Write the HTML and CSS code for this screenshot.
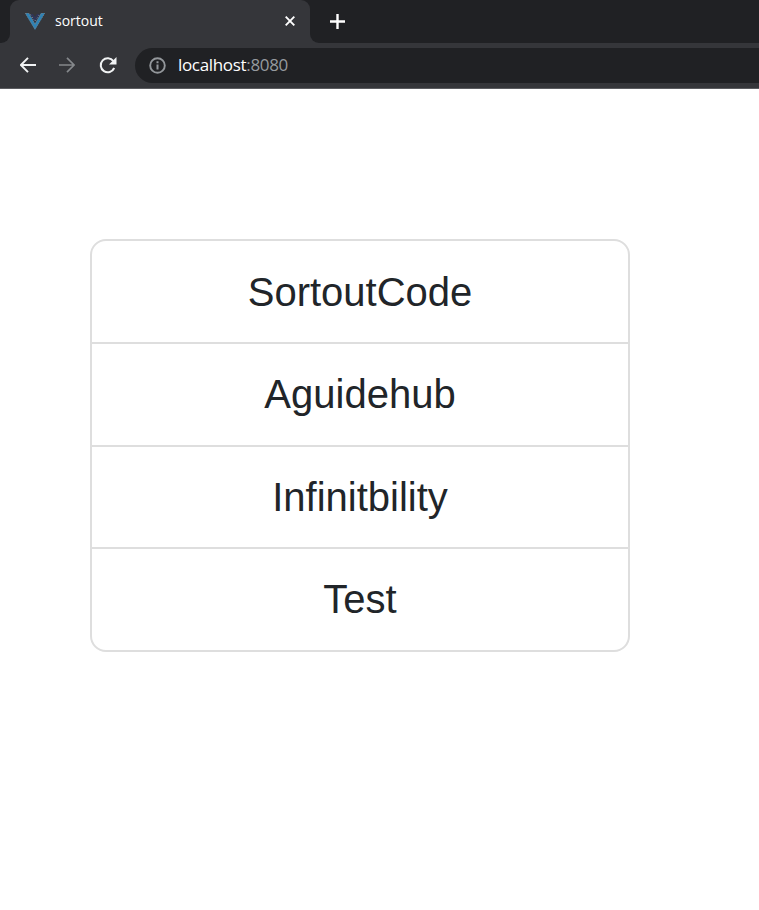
FILE: index.html
```html
<!DOCTYPE html>
<html lang="en">
<head>
<meta charset="utf-8">
<title>sortout</title>
<link rel="stylesheet" href="styles.css">
</head>
<body>
<header class="browser">
  <div class="tabs">
    <div class="edge edge-left"></div>
    <div class="tab">
      <svg class="logo" width="20" height="17" viewBox="0 0 20 17"><path d="M0 0h4l6 10.5L16 0h4L10 17z" fill="#2b83b8"/><path d="M.5.5h3.2L10 11.5 16.3.5h3.2L10 16z" fill="none" stroke="#777b7e" stroke-width="1" stroke-dasharray="1.2 1.2"/><path d="M5 1l5 8 5-8h-3l-2 3-2-3z" fill="#303557"/><path d="M5.5 1.5l4.5 7 4.5-7" fill="none" stroke="#858b91" stroke-dasharray="1 2"/></svg>
      <span class="tab-title">sortout</span>
      <svg class="close" width="10" height="10" viewBox="0 0 10 10"><path d="M.7.7l8.6 8.6M9.3.7L.7 9.3" stroke="#fff" stroke-width="1.9"/></svg>
    </div>
    <div class="edge edge-right">
      <svg class="plus" width="15" height="15" viewBox="0 0 15 15"><path d="M7.5 0v15M0 7.5h15" stroke="#fff" stroke-width="2.4"/></svg>
    </div>
  </div>
  <div class="toolbar">
    <svg class="back" width="16" height="16" viewBox="0 0 16 16"><path d="M16 8H1.5M8 .8L.9 8 8 15.2" fill="none" stroke="#f1f3f4" stroke-width="1.9"/></svg>
    <svg class="forward" width="16" height="16" viewBox="0 0 16 16"><path d="M0 8h14.5M8 .8L15.1 8 8 15.2" fill="none" stroke="#85888b" stroke-width="1.7"/></svg>
    <svg class="reload" width="18" height="17" viewBox="0 0 18 17"><path d="M14.4 4.1A7 7 0 1 0 15.2 11" fill="none" stroke="#f1f3f4" stroke-width="2"/><path d="M17.5 0v7.5H10z" fill="#f1f3f4"/></svg>
    <div class="address">
      <svg width="17" height="17" viewBox="0 0 17 17"><circle cx="8.5" cy="8.5" r="7.3" fill="none" stroke="#93979b" stroke-width="1.9"/><path d="M8.5 7.5v5M8.5 4.2v2" stroke="#93979b" stroke-width="2"/></svg>
      <span class="url">localhost<span class="port">:8080</span></span>
    </div>
  </div>
</header>
<main>
  <ul class="list">
    <li>SortoutCode</li>
    <li>Aguidehub</li>
    <li>Infinitbility</li>
    <li>Test</li>
  </ul>
</main>
</body>
</html>
```
FILE: styles.css
```css
* { box-sizing: border-box; }
body { margin: 0; background: #fff; font-family: "Liberation Sans", Arial, sans-serif; }
svg { display: block; flex: none; }

.browser { height: 89px; background: #35363a; border-bottom: 1px solid #5b5c60; font-family: "Open Sans", sans-serif; }
.tabs { height: 43px; display: flex; background: linear-gradient(#202124 0 20px, #35363a 20px); }
.edge { background: #202124; }
.edge-left { width: 10px; border-bottom-right-radius: 9px; }
.edge-right { flex: 1; padding: 14px 0 0 20px; border-bottom-left-radius: 9px; }
.tab { width: 300px; display: flex; align-items: center; padding: 0 15px 1px; background: #35363a; border-radius: 9px 9px 0 0; }
.tab-title { flex: 1; margin: -1px 0 0 10px; color: #fff; font-size: 14px; line-height: 20px; }
.toolbar { height: 45px; display: flex; align-items: center; padding: 0 0 1px 20px; }
.forward { margin-left: 23px; }
.reload { margin-left: 24px; }
.address { flex: 1; height: 35px; margin: 1px 0 0 18px; padding: 0 0 1px 14px; display: flex; align-items: center; background: #202124; border-radius: 18px 0 0 18px; }
.url { margin-left: 12px; color: #fff; font-size: 17px; line-height: 24px; letter-spacing: -.33px; }
.port { color: #969a9f; }

main { padding: 150px 129px 0 90px; }
.list { list-style: none; margin: 0; padding: 0; height: 413px; border: 2px solid #dedede; border-radius: 16px; display: grid; grid-template-rows: 103px 103px 102px 101px; }
.list li { display: flex; align-items: center; justify-content: center; border-bottom: 2px solid #dedede; color: #212529; font-size: 40px; line-height: 60px; }
.list li:nth-child(even) { padding-bottom: 2px; }
.list li:last-child { border-bottom: 0; }
```
